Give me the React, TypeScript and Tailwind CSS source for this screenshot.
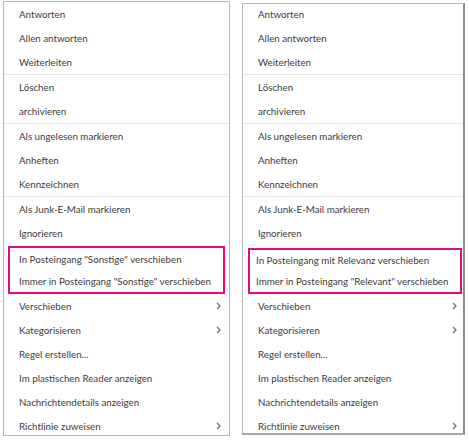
import React from "react";

type Item = { label: string; sub?: boolean };

const top: Item[][] = [
  [{ label: "Antworten" }, { label: "Allen antworten" }, { label: "Weiterleiten" }],
  [{ label: "Löschen" }, { label: "archivieren" }],
  [{ label: "Als ungelesen markieren" }, { label: "Anheften" }, { label: "Kennzeichnen" }],
  [{ label: "Als Junk-E-Mail markieren" }, { label: "Ignorieren" }],
];

const bottom: Item[] = [
  { label: "Verschieben", sub: true },
  { label: "Kategorisieren", sub: true },
  { label: "Regel erstellen..." },
  { label: "Im plastischen Reader anzeigen" },
  { label: "Nachrichtendetails anzeigen" },
  { label: "Richtlinie zuweisen", sub: true },
];

const Chevron = () => (
  <svg width="5" height="8" viewBox="0 0 5 8" fill="none" className="shrink-0">
    <path d="M1 1l3 3-3 3" stroke="#5a6b80" strokeWidth="1.2" />
  </svg>
);

const Row = ({ item, pr }: { item: Item; pr: string }) => (
  <div className={`flex items-center justify-between pl-[15px] h-6 shrink-0 whitespace-nowrap ${pr}`}>
    <span>{item.label}</span>
    {item.sub && <Chevron />}
  </div>
);

const Menu = ({
  highlight,
  className,
  innerClass,
  boxClass,
  boxRow,
  pr,
}: {
  highlight: string[];
  className: string;
  innerClass: string;
  boxClass: string;
  boxRow: string;
  pr: string;
}) => (
  <div className={`bg-white overflow-hidden ${className}`}>
    <div className={`flex flex-col ${innerClass}`}>
      {top.map((group, gi) => (
        <div key={gi} className={gi < top.length - 1 ? "border-b border-[#e6e6e6]" : ""}>
          {group.map((item) => (
            <Row key={item.label} item={item} pr={pr} />
          ))}
        </div>
      ))}
      <div className={`border-2 border-[#e4097f] shrink-0 ${boxClass}`}>
        {highlight.map((label) => (
          <div key={label} className={`flex items-center whitespace-nowrap ${boxRow}`}>
            {label}
          </div>
        ))}
      </div>
      {bottom.map((item) => (
        <Row key={item.label} item={item} pr={pr} />
      ))}
    </div>
  </div>
);

export default function App() {
  return (
    <div
      className="w-[469px] h-[442px] bg-white flex items-start gap-[12px] pl-[3px] pt-[1px] text-[9.75px] text-[#3c3c3c]"
      style={{ fontFamily: 'Lato, "Open Sans", sans-serif' }}
    >
      <Menu
        className="w-[227px] h-[435px] border border-[#b8b8b8]"
        innerClass=""
        boxClass="mx-[4px] mt-[1px] pl-[9px]"
        boxRow="h-[22px]"
        pr="pr-[8px]"
        highlight={['In Posteingang "Sonstige" verschieben', 'Immer in Posteingang "Sonstige" verschieben']}
      />
      <Menu
        className="w-[223px] h-[432px] mt-[2px] border border-[#b8b8b8] border-r-2 border-b-2 border-r-[#8c8c8c] border-b-[#a8a8a8]"
        innerClass="-mt-[2px]"
        boxClass="ml-[5px] mr-[1px] mt-[3px] pl-[6px]"
        boxRow="h-[21px]"
        pr="pr-[6px]"
        highlight={["In Posteingang mit Relevanz verschieben", 'Immer in Posteingang "Relevant" verschieben']}
      />
    </div>
  );
}
